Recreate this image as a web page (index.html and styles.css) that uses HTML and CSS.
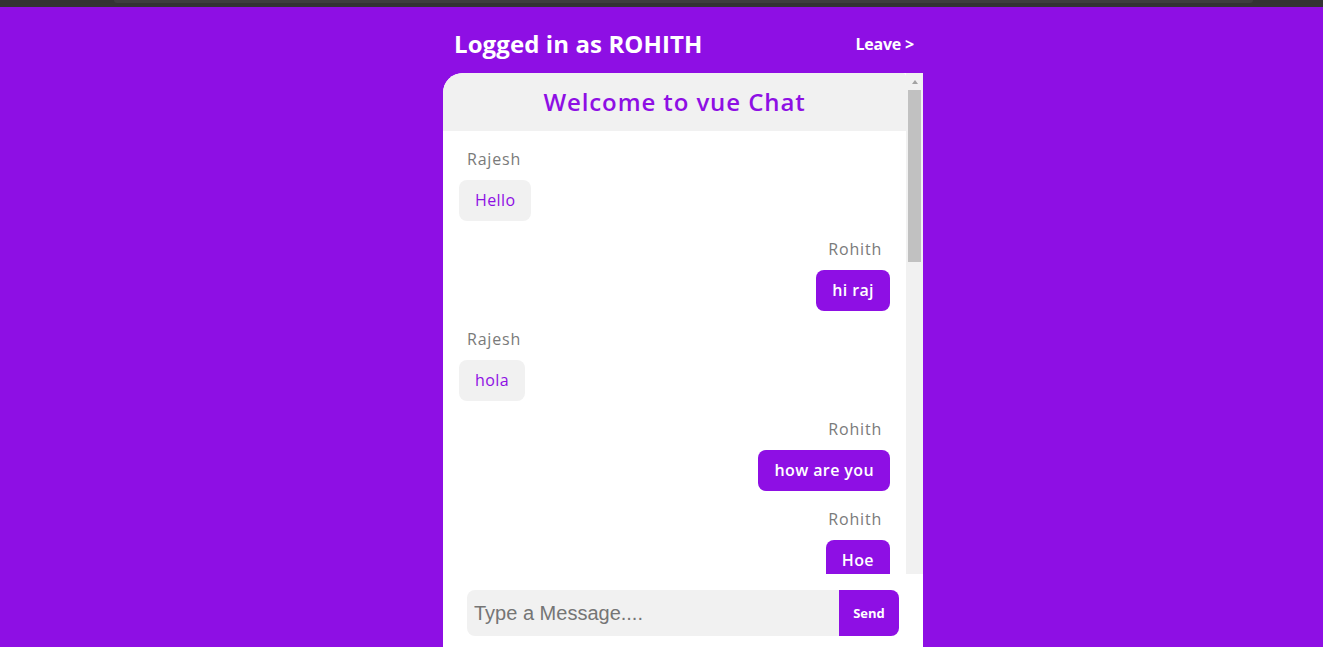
FILE: index.html
```html
<!DOCTYPE html>
<html lang="en">
<head>
<meta charset="utf-8">
<title>vue Chat</title>
<link rel="stylesheet" href="styles.css">
</head>
<body>
<div class="topbar"><div class="topbar-pill"></div></div>
<div class="app">
  <header class="app-header">
    <h1 class="logged">Logged in as ROHITH</h1>
    <a class="leave" href="#">Leave &gt;</a>
  </header>
  <section class="chat">
    <div class="chat-body">
      <div class="scroller">
        <div class="chat-title">Welcome to vue Chat</div>
        <div class="messages">
          <div class="msg other"><div class="sender">Rajesh</div><div class="bubble">Hello</div></div>
          <div class="msg mine"><div class="sender">Rohith</div><div class="bubble">hi raj</div></div>
          <div class="msg other"><div class="sender">Rajesh</div><div class="bubble">hola</div></div>
          <div class="msg mine"><div class="sender">Rohith</div><div class="bubble">how are you</div></div>
          <div class="msg mine"><div class="sender">Rohith</div><div class="bubble">Hoe</div></div>
        </div>
      </div>
      <div class="scrollbar" aria-hidden="true">
        <div class="scrollbar-up"><span class="scrollbar-arrow"></span></div>
        <div class="scrollbar-thumb"></div>
      </div>
    </div>
    <form class="composer">
      <input class="composer-input" type="text" placeholder="Type a Message....">
      <button class="composer-send" type="button">Send</button>
    </form>
  </section>
</div>
</body>
</html>
```
FILE: styles.css
```css
html, body {
  margin: 0;
  padding: 0;
  height: 100%;
  overflow: hidden;
}

body {
  background: #8e0fe4;
  font-family: "Open Sans", "Liberation Sans", sans-serif;
}

.topbar {
  height: 7px;
  background: #333333;
  display: flex;
}

.topbar-pill {
  flex: 1;
  margin: 0 70px 0 114px;
  height: 3px;
  background: #3e3e3e;
  border-radius: 0 0 6px 6px;
}

.app {
  width: 480px;
  margin-left: 443px;
}

.app-header {
  box-sizing: border-box;
  height: 66px;
  padding: 6px 9px 0 11px;
  display: flex;
  align-items: center;
  justify-content: space-between;
  color: #ffffff;
}

.logged {
  margin: 0;
  font-size: 24px;
  font-weight: 700;
  letter-spacing: 0.1px;
}

.leave {
  color: #ffffff;
  text-decoration: none;
  font-size: 16px;
  font-weight: 700;
  letter-spacing: -0.2px;
  margin-top: 2px;
}

.chat {
  background: #ffffff;
  border-top-left-radius: 20px;
  overflow: hidden;
}

.chat-body {
  display: flex;
  height: 501px;
}

.scroller {
  flex: 1;
  min-width: 0;
  overflow: hidden;
}

.scrollbar {
  width: 17px;
  flex: none;
  background: #f1f1f1;
  display: flex;
  flex-direction: column;
}

.scrollbar-up {
  height: 17px;
  display: flex;
  justify-content: center;
  align-items: flex-start;
}

.scrollbar-arrow {
  margin-top: 7px;
  margin-left: 1px;
  width: 0;
  height: 0;
  border-left: 3.5px solid transparent;
  border-right: 3.5px solid transparent;
  border-bottom: 4px solid #a3a3a3;
}

.scrollbar-thumb {
  height: 172px;
  margin: 0 2px;
  background: #c1c1c1;
}

.chat-title {
  height: 58px;
  line-height: 58px;
  background: #f1f1f1;
  color: #8e0fe4;
  text-align: center;
  font-size: 24px;
  font-weight: 600;
  letter-spacing: 0.9px;
  border-top-right-radius: 4px;
}

.messages {
  padding: 16px;
  display: flex;
  flex-direction: column;
}

.msg {
  display: flex;
  flex-direction: column;
  margin-bottom: 16px;
}

.msg.other {
  align-items: flex-start;
}

.msg.mine {
  align-items: flex-end;
}

.sender {
  font-size: 16px;
  line-height: 24px;
  color: #7a7a7a;
  padding: 0 8px;
  margin-bottom: 9px;
  letter-spacing: 0.8px;
}

.bubble {
  font-size: 16px;
  line-height: 25px;
  padding: 8px 16px;
  border-radius: 8px;
  letter-spacing: 0.4px;
}

.other .bubble {
  background: #f1f1f1;
  color: #8e0fe4;
}

.mine .bubble {
  background: #8e0fe4;
  color: #ffffff;
  font-weight: 600;
}

.composer {
  display: flex;
  padding: 16px 24px 11px;
  margin: 0;
}

.composer-input {
  flex: 1;
  height: 46px;
  box-sizing: border-box;
  border: none;
  outline: none;
  background: #f1f1f1;
  border-radius: 8px 0 0 8px;
  padding: 0 7px;
  font-family: "Liberation Sans", Arial, sans-serif;
  font-size: 20px;
  color: #333333;
}

.composer-input::placeholder {
  color: #757575;
}

.composer-send {
  width: 60px;
  height: 46px;
  border: none;
  background: #8e0fe4;
  color: #ffffff;
  border-radius: 0 8px 8px 0;
  font-family: "Open Sans", "Liberation Sans", sans-serif;
  font-size: 13px;
  font-weight: 700;
  padding: 0;
}
```
